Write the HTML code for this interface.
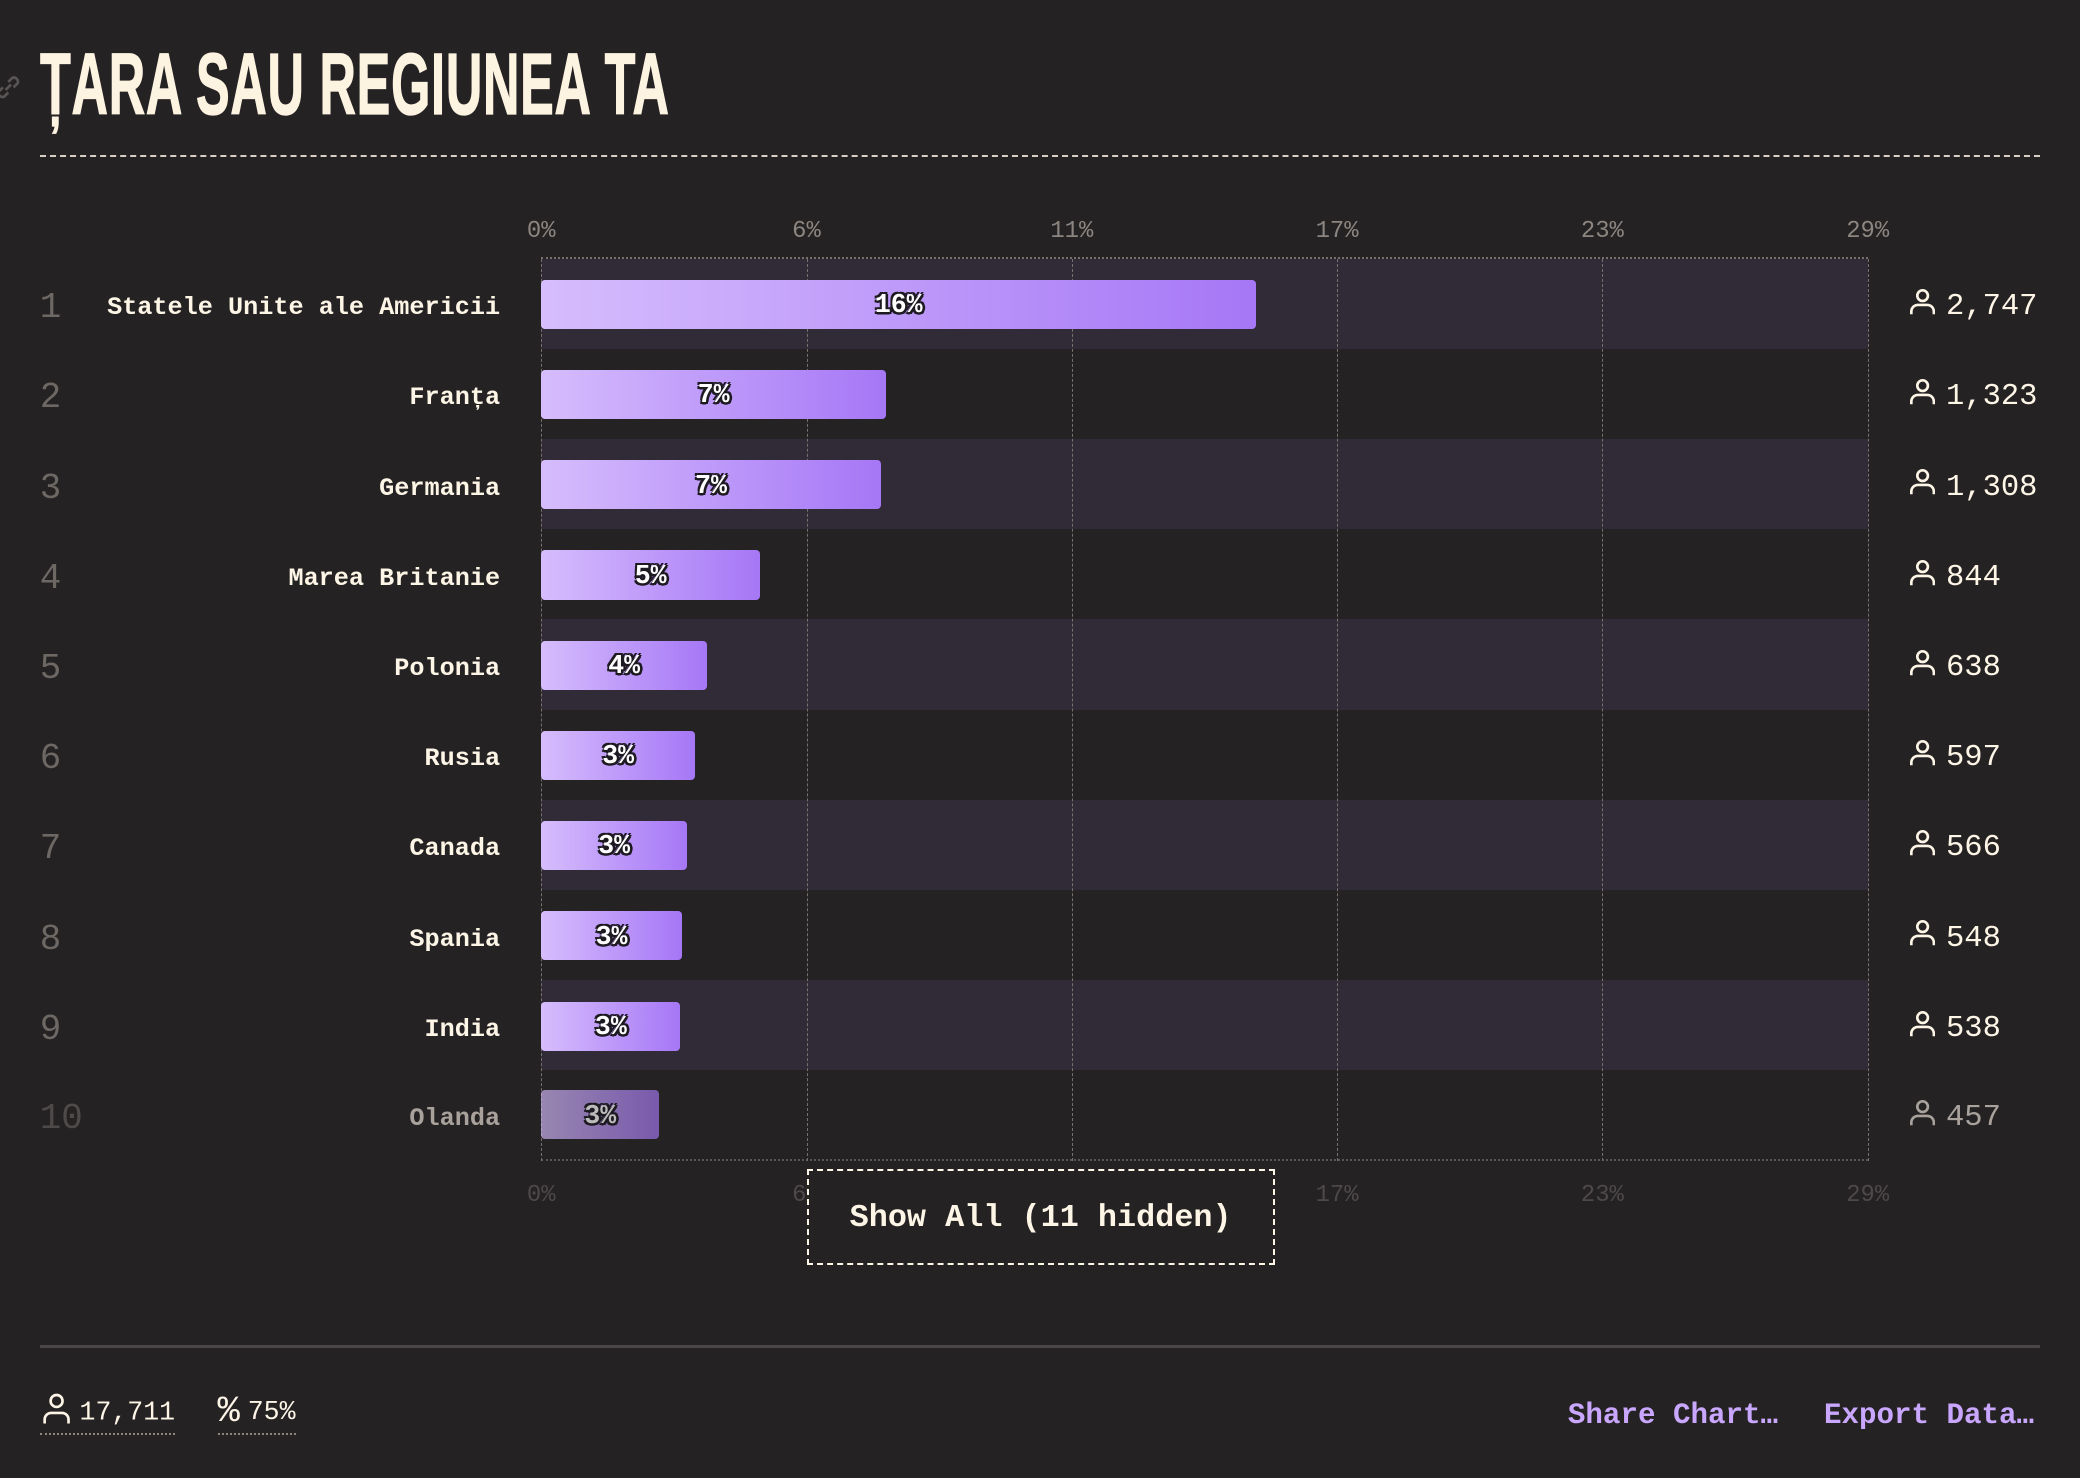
<!DOCTYPE html>
<html><head><meta charset="utf-8"><style>
html,body{margin:0;padding:0;background:#252223;}
body{width:2080px;height:1478px;overflow:hidden;}
#w{position:relative;width:1568px;height:1114px;zoom:1.3265;font-family:"Liberation Mono",monospace;color:#fdf5e6;}
.a{position:absolute;}
.title{left:30px;top:28px;font-family:"Liberation Sans Narrow","Liberation Sans",sans-serif;font-weight:bold;font-size:66px;line-height:72px;color:#fdf3e1;white-space:nowrap;transform:scaleX(0.576);transform-origin:left top;letter-spacing:1px;-webkit-text-stroke:1px #fdf3e1}
.dash{left:30px;top:117px;width:1508px;height:0;border-top:2px dashed #d8d0c4;}
.tick{font-size:18px;color:#8c8580;width:60px;text-align:center;}
.tickb{font-size:18px;color:#4d4849;width:60px;text-align:center;}
.stripe{left:408px;width:1000px;height:68px;background:#302b37;}
.vg{top:195px;height:680px;width:0;border-left:1px dashed #77716e;}
.bar{left:408px;height:37px;border-radius:3px;background:linear-gradient(90deg,#d6bdfd,#a677f6);}
.bl{font-weight:bold;font-size:20px;color:#fff;text-align:center;line-height:37px;text-shadow:-1.5px -1.5px 0 #1e1a22,1.5px -1.5px 0 #1e1a22,-1.5px 1.5px 0 #1e1a22,1.5px 1.5px 0 #1e1a22,0 2px 0 #1e1a22,2px 0 0 #1e1a22;}
.rk{left:30px;font-size:27px;color:#6e6864;line-height:40px;}
.nm{right:1191px;font-size:19px;font-weight:bold;line-height:40px;white-space:nowrap;text-align:right;}
.ct{left:1440px;font-size:23px;line-height:40px;white-space:nowrap;}
.ct svg{vertical-align:-1px;margin-right:8px}
.btn{left:608px;top:881px;width:350px;height:70px;border:2px dashed #fdf5e6;font-weight:bold;font-size:24px;line-height:72px;text-align:center;background:#252223;}
.sep{left:30px;top:1014px;width:1508px;height:2px;background:#4a4647;}
.ft{font-size:20px;line-height:30px;white-space:nowrap;border-bottom:2px dotted #8c8580;}
.lk{font-size:22px;font-weight:bold;color:#c9a7ff;top:1052px;line-height:32px;}
</style></head><body><div id="w">
<svg class="a" style="left:-4px;top:56px" width="20" height="20" viewBox="0 0 20 20"><path d="M8 12 L12 8 M6 10 L3 13 a3 3 0 0 0 4 4 L10 14 M10 6 L13 3 a3 3 0 0 1 4 4 L14 10" stroke="#5a5555" stroke-width="2" fill="none"/></svg>
<div class="a title">ȚARA SAU REGIUNEA TA</div>
<div class="a dash"></div>

<div class="a tick" style="left:378px;top:164px">0%</div>
<div class="a tick" style="left:578px;top:164px">6%</div>
<div class="a tick" style="left:778px;top:164px">11%</div>
<div class="a tick" style="left:978px;top:164px">17%</div>
<div class="a tick" style="left:1178px;top:164px">23%</div>
<div class="a tick" style="left:1378px;top:164px">29%</div>

<div class="a stripe" style="top:195px"></div>
<div class="a stripe" style="top:331px"></div>
<div class="a stripe" style="top:467px"></div>
<div class="a stripe" style="top:603px"></div>
<div class="a stripe" style="top:739px"></div>
<div class="a" style="left:408px;top:194px;width:1000px;border-top:2px dotted #77716e"></div>
<div class="a" style="left:408px;top:874px;width:1000px;border-top:2px dotted #5a5556"></div>

<div class="a vg" style="left:408px"></div>
<div class="a vg" style="left:608px"></div>
<div class="a vg" style="left:808px"></div>
<div class="a vg" style="left:1008px"></div>
<div class="a vg" style="left:1208px"></div>
<div class="a vg" style="left:1408px"></div>

<div class="a bar" style="top:211px;width:539px"></div><div class="a bl" style="left:408px;top:212px;width:539px">16%</div>
<div class="a bar" style="top:279px;width:260px"></div><div class="a bl" style="left:408px;top:280px;width:260px">7%</div>
<div class="a bar" style="top:347px;width:256px"></div><div class="a bl" style="left:408px;top:348px;width:256px">7%</div>
<div class="a bar" style="top:415px;width:165px"></div><div class="a bl" style="left:408px;top:416px;width:165px">5%</div>
<div class="a bar" style="top:483px;width:125px"></div><div class="a bl" style="left:408px;top:484px;width:125px">4%</div>
<div class="a bar" style="top:551px;width:116px"></div><div class="a bl" style="left:408px;top:552px;width:116px">3%</div>
<div class="a bar" style="top:619px;width:110px"></div><div class="a bl" style="left:408px;top:620px;width:110px">3%</div>
<div class="a bar" style="top:687px;width:106px"></div><div class="a bl" style="left:408px;top:688px;width:106px">3%</div>
<div class="a bar" style="top:755px;width:105px"></div><div class="a bl" style="left:408px;top:756px;width:105px">3%</div>
<div class="a bar" style="top:822px;width:89px;opacity:0.65"></div><div class="a bl" style="left:408px;top:823px;width:89px;color:#bbb">3%</div>

<div class="a rk" style="top:212px">1</div><div class="a nm" style="top:212px">Statele Unite ale Americii</div>
<div class="a rk" style="top:280px">2</div><div class="a nm" style="top:280px">Franța</div>
<div class="a rk" style="top:348px">3</div><div class="a nm" style="top:348px">Germania</div>
<div class="a rk" style="top:416px">4</div><div class="a nm" style="top:416px">Marea Britanie</div>
<div class="a rk" style="top:484px">5</div><div class="a nm" style="top:484px">Polonia</div>
<div class="a rk" style="top:552px">6</div><div class="a nm" style="top:552px">Rusia</div>
<div class="a rk" style="top:620px">7</div><div class="a nm" style="top:620px">Canada</div>
<div class="a rk" style="top:688px">8</div><div class="a nm" style="top:688px">Spania</div>
<div class="a rk" style="top:756px">9</div><div class="a nm" style="top:756px">India</div>
<div class="a rk" style="top:823px;color:#4f4a4a">10</div><div class="a nm" style="top:823px;color:#a9a29c">Olanda</div>

<div class="a ct" style="top:212px"><svg width="19" height="20" viewBox="0 0 19 20"><circle cx="9.5" cy="5" r="4" stroke="#fdf5e6" stroke-width="2" fill="none"/><path d="M1 19 v-2 a5 5 0 0 1 5 -5 h7 a5 5 0 0 1 5 5 v2" stroke="#fdf5e6" stroke-width="2" fill="none"/></svg>2,747</div>
<div class="a ct" style="top:280px"><svg width="19" height="20" viewBox="0 0 19 20"><circle cx="9.5" cy="5" r="4" stroke="#fdf5e6" stroke-width="2" fill="none"/><path d="M1 19 v-2 a5 5 0 0 1 5 -5 h7 a5 5 0 0 1 5 5 v2" stroke="#fdf5e6" stroke-width="2" fill="none"/></svg>1,323</div>
<div class="a ct" style="top:348px"><svg width="19" height="20" viewBox="0 0 19 20"><circle cx="9.5" cy="5" r="4" stroke="#fdf5e6" stroke-width="2" fill="none"/><path d="M1 19 v-2 a5 5 0 0 1 5 -5 h7 a5 5 0 0 1 5 5 v2" stroke="#fdf5e6" stroke-width="2" fill="none"/></svg>1,308</div>
<div class="a ct" style="top:416px"><svg width="19" height="20" viewBox="0 0 19 20"><circle cx="9.5" cy="5" r="4" stroke="#fdf5e6" stroke-width="2" fill="none"/><path d="M1 19 v-2 a5 5 0 0 1 5 -5 h7 a5 5 0 0 1 5 5 v2" stroke="#fdf5e6" stroke-width="2" fill="none"/></svg>844</div>
<div class="a ct" style="top:484px"><svg width="19" height="20" viewBox="0 0 19 20"><circle cx="9.5" cy="5" r="4" stroke="#fdf5e6" stroke-width="2" fill="none"/><path d="M1 19 v-2 a5 5 0 0 1 5 -5 h7 a5 5 0 0 1 5 5 v2" stroke="#fdf5e6" stroke-width="2" fill="none"/></svg>638</div>
<div class="a ct" style="top:552px"><svg width="19" height="20" viewBox="0 0 19 20"><circle cx="9.5" cy="5" r="4" stroke="#fdf5e6" stroke-width="2" fill="none"/><path d="M1 19 v-2 a5 5 0 0 1 5 -5 h7 a5 5 0 0 1 5 5 v2" stroke="#fdf5e6" stroke-width="2" fill="none"/></svg>597</div>
<div class="a ct" style="top:620px"><svg width="19" height="20" viewBox="0 0 19 20"><circle cx="9.5" cy="5" r="4" stroke="#fdf5e6" stroke-width="2" fill="none"/><path d="M1 19 v-2 a5 5 0 0 1 5 -5 h7 a5 5 0 0 1 5 5 v2" stroke="#fdf5e6" stroke-width="2" fill="none"/></svg>566</div>
<div class="a ct" style="top:688px"><svg width="19" height="20" viewBox="0 0 19 20"><circle cx="9.5" cy="5" r="4" stroke="#fdf5e6" stroke-width="2" fill="none"/><path d="M1 19 v-2 a5 5 0 0 1 5 -5 h7 a5 5 0 0 1 5 5 v2" stroke="#fdf5e6" stroke-width="2" fill="none"/></svg>548</div>
<div class="a ct" style="top:756px"><svg width="19" height="20" viewBox="0 0 19 20"><circle cx="9.5" cy="5" r="4" stroke="#fdf5e6" stroke-width="2" fill="none"/><path d="M1 19 v-2 a5 5 0 0 1 5 -5 h7 a5 5 0 0 1 5 5 v2" stroke="#fdf5e6" stroke-width="2" fill="none"/></svg>538</div>
<div class="a ct" style="top:823px;color:#a9a29c"><svg width="19" height="20" viewBox="0 0 19 20"><circle cx="9.5" cy="5" r="4" stroke="#a9a29c" stroke-width="2" fill="none"/><path d="M1 19 v-2 a5 5 0 0 1 5 -5 h7 a5 5 0 0 1 5 5 v2" stroke="#a9a29c" stroke-width="2" fill="none"/></svg>457</div>

<div class="a tickb" style="left:378px;top:891px">0%</div>
<div class="a tickb" style="left:578px;top:891px">6%</div>
<div class="a tickb" style="left:778px;top:891px">11%</div>
<div class="a tickb" style="left:978px;top:891px">17%</div>
<div class="a tickb" style="left:1178px;top:891px">23%</div>
<div class="a tickb" style="left:1378px;top:891px">29%</div>

<div class="a btn">Show All (11 hidden)</div>

<div class="a sep"></div>
<div class="a ft" style="left:30px;top:1050px"><svg width="22" height="24" viewBox="0 0 22 24" style="vertical-align:-4px;margin:0 6px 0 2px"><circle cx="11" cy="6" r="4.5" stroke="#fdf5e6" stroke-width="2" fill="none"/><path d="M2 23 v-3 a5 5 0 0 1 5 -5 h8 a5 5 0 0 1 5 5 v3" stroke="#fdf5e6" stroke-width="2" fill="none"/></svg>17,711</div>
<div class="a ft" style="left:164px;top:1050px"><span style="font-size:28px;vertical-align:-2px;margin-right:6px">%</span>75%</div>
<div class="a lk" style="left:1182px">Share Chart…</div>
<div class="a lk" style="left:1375px">Export Data…</div>
</div></body></html>
